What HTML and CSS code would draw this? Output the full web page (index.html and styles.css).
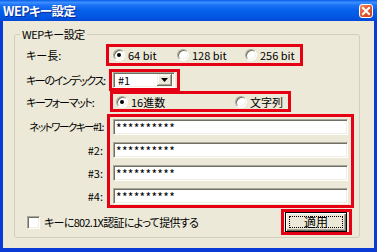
FILE: index.html
```html
<!DOCTYPE html>
<html lang="ja">
<head>
    <meta charset="UTF-8">
    <title>WEPキー設定</title>
    <link rel="stylesheet" href="styles.css">
</head>
<body>

<div class="window">
    <div class="titlebar">
        <span class="title">WEPキー設定</span>
        <span class="close">
            <svg width="14" height="14" viewBox="0 0 14 14">
                <path d="M4 4 L10 10 M10 4 L4 10" stroke="#fff" stroke-width="2" stroke-linecap="square"/>
            </svg>
        </span>
    </div>

    <div class="client">
        <div class="group">
            <div class="legend">WEPキー設定</div>

            <!-- key length -->
            <div class="row row-len">
                <span class="label label-len">キー長:</span>
                <div class="mark mark-len">
                    <span class="opt opt-64"><span class="radio on"></span>64 bit</span>
                    <span class="opt opt-128"><span class="radio"></span>128 bit</span>
                    <span class="opt"><span class="radio"></span>256 bit</span>
                </div>
            </div>

            <!-- key index -->
            <div class="row row-idx">
                <span class="label label-idx">キーのインデックス:</span>
                <div class="mark mark-idx">
                    <div class="combo">
                        <span class="combo-text">#1</span>
                        <span class="combo-btn">
                            <svg width="7" height="4" viewBox="0 0 7 4"><path d="M0 0 H7 L3.5 4 Z" fill="#000"/></svg>
                        </span>
                    </div>
                </div>
            </div>

            <!-- key format -->
            <div class="row row-fmt">
                <span class="label label-fmt">キーフォーマット:</span>
                <div class="mark mark-fmt">
                    <span class="opt opt-hex"><span class="radio on"></span>16進数</span>
                    <span class="opt"><span class="radio"></span>文字列</span>
                </div>
            </div>

            <!-- network keys -->
            <div class="row row-keys">
                <div class="key-labels">
                    <span class="key-label key-first">ネットワークキー#1:</span>
                    <span class="key-label">#2:</span>
                    <span class="key-label">#3:</span>
                    <span class="key-label">#4:</span>
                </div>
                <div class="mark mark-keys">
                    <div class="field">**********</div>
                    <div class="field">**********</div>
                    <div class="field">**********</div>
                    <div class="field">**********</div>
                </div>
            </div>

            <!-- 802.1X + apply -->
            <div class="row row-foot">
                <span class="check"></span>
                <span class="check-label">キーに802.1X認証によって提供する</span>
                <div class="mark mark-btn">
                    <div class="button"><span class="focus">適用</span></div>
                </div>
            </div>
        </div>
    </div>
</div>

</body>
</html>
```

FILE: styles.css
```css
body {
    margin: 0;
    padding: 0;
    font-family: "Noto Sans CJK JP", "Noto Sans", sans-serif;
    font-size: 11px;
    font-feature-settings: "palt";
    color: #000;
}
.window {
    width: 377px;
    height: 252px;
    background-color: #0b3bd6;
    display: flex;
    flex-direction: column;
    box-sizing: border-box;
    overflow: hidden;
}
.titlebar {
    height: 21px;
    flex: none;
    display: flex;
    align-items: center;
    justify-content: space-between;
    padding: 0 4px 0 3px;
    background: linear-gradient(to bottom, #0a5ee8 0%, #3b8fff 12%, #1c72f6 25%, #0560ea 50%, #0257e3 80%, #0049d6 100%);
}
.title {
    color: #fff;
    font-weight: bold;
    font-size: 12.5px;
    line-height: 21px;
    letter-spacing: -0.5px;
    text-shadow: 1px 1px 0 #0a2a9a;
}
.close {
    width: 14px;
    height: 14px;
    box-sizing: border-box;
    border: 1px solid #fff;
    border-radius: 3px;
    background: linear-gradient(135deg, #f08a68 0%, #e35b32 45%, #c9401c 100%);
    display: flex;
    align-items: center;
    justify-content: center;
}
.close svg {
    display: block;
    margin: -1px;
}
.client {
    flex: 1;
    margin: 0 3px 4px 3px;
    background-color: #ece9d8;
    padding-top: 13px;
}
.group {
    margin: 0 14px 0 11px;
    height: 204px;
    box-sizing: border-box;
    border: 1px solid #d0d0bf;
    border-radius: 3px;
}
.legend {
    width: max-content;
    margin: -7px 0 0 5px;
    padding: 0 2px;
    line-height: 13px;
    letter-spacing: -0.5px;
    background-color: #ece9d8;
}
.row {
    display: flex;
    align-items: center;
    padding-left: 11px;
}
.label {
    flex: none;
    white-space: nowrap;
    overflow: hidden;
}
.mark {
    flex: none;
    box-sizing: border-box;
    border: 3px solid #e50014;
}
.opt {
    display: inline-flex;
    align-items: center;
    white-space: nowrap;
}
.radio {
    width: 12px;
    height: 12px;
    box-sizing: border-box;
    border-radius: 50%;
    border: 1px solid;
    border-color: #aca899 #fff #fff #aca899;
    box-shadow: inset 1px 1px 0 #716f64, inset -1px -1px 0 #f1efe2;
    background-color: #fff;
    margin-right: 3px;
    display: flex;
    align-items: center;
    justify-content: center;
}
.radio.on::after {
    content: "";
    width: 4px;
    height: 4px;
    border-radius: 50%;
    background-color: #000;
}

/* rows */
.row-len {
    margin-top: 3px;
    height: 22px;
}
.label-len {
    width: 80px;
}
.mark-len {
    width: 197px;
    height: 22px;
    display: flex;
    align-items: center;
    padding-left: 4px;
}
.opt-64 {
    width: 64px;
}
.opt-128 {
    width: 68px;
}
.row-idx {
    margin-top: 3px;
    height: 22px;
}
.label-idx {
    width: 83px;
    letter-spacing: -1.4px;
}
.mark-idx {
    width: 71px;
    height: 22px;
    padding-left: 1px;
}
.combo {
    width: 62px;
    height: 16px;
    box-sizing: border-box;
    border: 1px solid;
    border-color: #aca899 #fff #fff #aca899;
    box-shadow: inset 1px 1px 0 #716f64, inset -1px -1px 0 #f1efe2;
    background-color: #fff;
    display: flex;
    align-items: center;
    justify-content: space-between;
    padding: 2px 2px 2px 4px;
}
.combo-text {
    line-height: 12px;
}
.combo-btn {
    width: 15px;
    height: 12px;
    box-sizing: border-box;
    background-color: #ece9d8;
    box-shadow: inset -1px -1px 0 #716f64, inset 1px 1px 0 #f1efe2, inset -2px -2px 0 #aca899, inset 2px 2px 0 #fff;
    display: flex;
    align-items: center;
    justify-content: center;
}
.combo-btn svg {
    display: block;
}
.row-fmt {
    height: 21px;
}
.label-fmt {
    width: 84px;
    letter-spacing: -1.3px;
}
.mark-fmt {
    width: 181px;
    height: 21px;
    display: flex;
    align-items: center;
    padding-left: 3px;
}
.opt-hex {
    width: 119px;
}
.row-keys {
    margin-top: 2px;
    align-items: flex-start;
}
.key-labels {
    width: 81px;
    flex: none;
    display: flex;
    flex-direction: column;
    align-items: flex-end;
    gap: 7px;
    padding-top: 5px;
    padding-right: 4px;
    box-sizing: border-box;
}
.key-label {
    line-height: 16px;
    white-space: nowrap;
}
.key-first {
    font-size: 10.5px;
    letter-spacing: -1.5px;
}
.mark-keys {
    width: 247px;
    height: 94px;
    display: flex;
    flex-direction: column;
    gap: 7px;
    padding: 2px 3px;
}
.field {
    height: 16px;
    box-sizing: border-box;
    border: 1px solid;
    border-color: #aca899 #fff #fff #aca899;
    box-shadow: inset 1px 1px 0 #716f64, inset -1px -1px 0 #f1efe2;
    background-color: #fff;
    padding-left: 2px;
    font-size: 12px;
    line-height: 16px;
    letter-spacing: 0.3px;
}
.row-foot {
    margin-top: 1px;
    height: 26px;
    padding-right: 7px;
}
.check {
    width: 13px;
    height: 13px;
    box-sizing: border-box;
    margin-left: 1px;
    margin-right: 4px;
    border: 1px solid;
    border-color: #aca899 #fff #fff #aca899;
    box-shadow: inset 1px 1px 0 #716f64, inset -1px -1px 0 #f1efe2;
    background-color: #fff;
}
.check-label {
    white-space: nowrap;
    letter-spacing: -0.7px;
}
.mark-btn {
    margin-left: auto;
    width: 71px;
    height: 26px;
    padding-left: 1px;
}
.button {
    width: 62px;
    height: 20px;
    box-sizing: border-box;
    border: 1px solid #000;
    background-color: #ece9d8;
    box-shadow: inset 1px 1px 0 #fff, inset -1px -1px 0 #716f64, inset -2px -2px 0 #aca899;
    padding: 3px;
    display: flex;
}
.focus {
    flex: 1;
    border: 1px dotted #000;
    text-align: center;
    line-height: 10px;
    font-size: 12px;
}
```
